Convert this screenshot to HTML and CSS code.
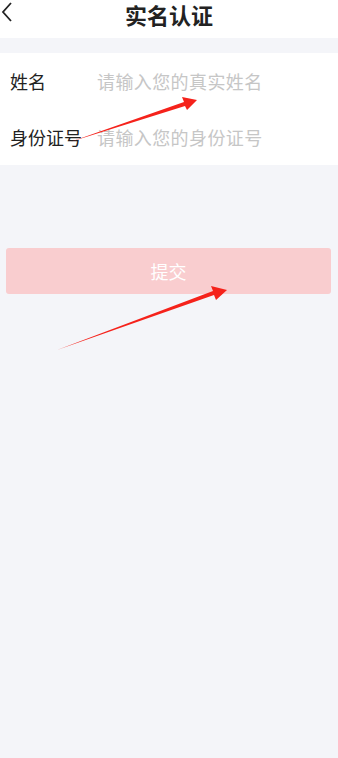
FILE: index.html
```html
<!DOCTYPE html>
<html lang="zh">
<head>
<meta charset="utf-8">
<link rel="stylesheet" href="styles.css">
</head>
<body>
<div class="page">
  <header class="nav">
    <span class="back">
      <svg width="14" height="22" viewBox="0 0 14 22"><path d="M11 2 L3 11 L11 20" fill="none" stroke="#222" stroke-width="1.8"/></svg>
    </span>
    <h1 class="title">实名认证</h1>
  </header>
  <div class="gap"></div>
  <section class="form">
    <div class="row">
      <span class="label">姓名</span>
      <span class="placeholder">请输入您的真实姓名</span>
    </div>
    <div class="row">
      <span class="label">身份证号</span>
      <span class="placeholder">请输入您的身份证号</span>
    </div>
  </section>
  <div class="actions">
    <button class="submit">提交</button>
  </div>
  <svg class="arrows" width="338" height="758" viewBox="0 0 338 758">
    <polygon points="70,142 184,102 182,97 197,100 187,110 185,106" fill="#f5221b"/>
    <polygon points="57,350 213,291 211,286 227,290 216,300 214,295" fill="#f5221b"/>
  </svg>
</div>
</body>
</html>
```
FILE: styles.css
```css
html, body {
  margin: 0;
  padding: 0;
}
body {
  background: #f4f5f9;
  font-family: "Noto Sans CJK SC", "Noto Sans", sans-serif;
}
.page {
  position: relative;
  width: 338px;
  height: 758px;
  background: #f4f5f9;
  overflow: hidden;
}
.nav {
  height: 38px;
  background: #fff;
  display: flex;
  align-items: flex-start;
  justify-content: center;
  position: relative;
}
.back {
  position: absolute;
  left: 0;
  top: 1px;
  width: 14px;
  height: 22px;
}
.back svg { display: block; }
.title {
  margin: 0;
  padding-top: 1px;
  font-size: 22px;
  font-weight: 700;
  color: #222;
  line-height: 26px;
}
.gap {
  height: 15px;
}
.form {
  background: #fff;
  display: flex;
  flex-direction: column;
}
.row {
  height: 56px;
  display: flex;
  align-items: center;
  padding-left: 10px;
  font-size: 18px;
}
.label {
  width: 87px;
  color: #222;
}
.placeholder {
  color: #c6c6c6;
  letter-spacing: 0.4px;
}
.actions {
  padding: 83px 7px 0 6px;
}
.submit {
  width: 100%;
  height: 46px;
  border: none;
  border-radius: 3px;
  background: #f9cdcf;
  color: #fff;
  font-family: "Noto Sans CJK SC", "Noto Sans", sans-serif;
  font-size: 18px;
  padding: 0;
}
.arrows {
  position: absolute;
  left: 0;
  top: 0;
  pointer-events: none;
}
```
